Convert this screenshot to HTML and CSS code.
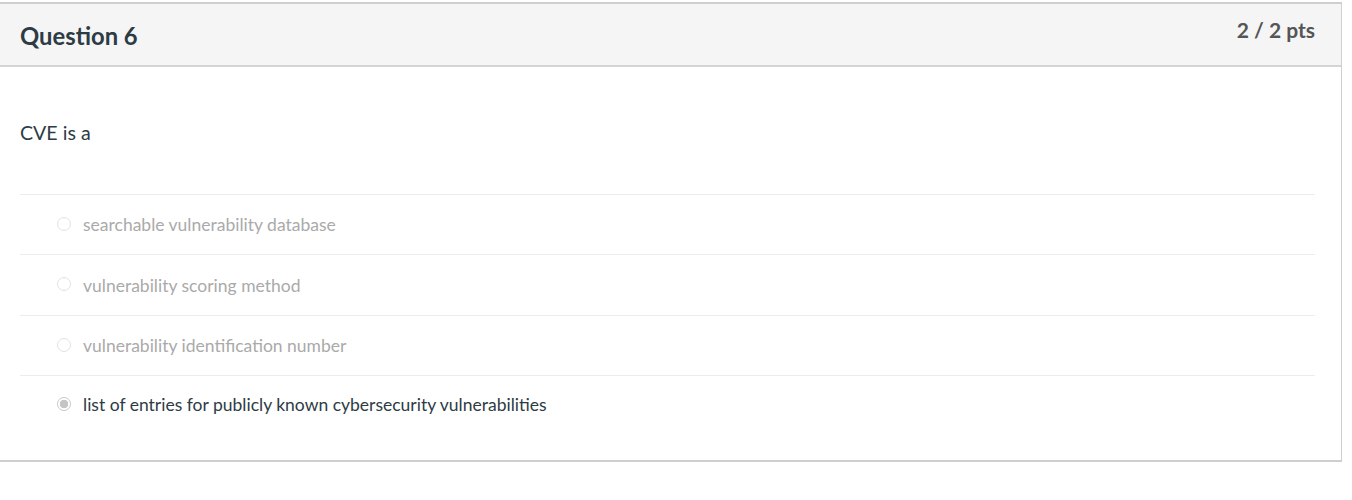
FILE: index.html
```
<!DOCTYPE html>
<html>
<head>
<meta charset="utf-8">
<link rel="stylesheet" href="styles.css">
</head>
<body>
<div class="card">
  <div class="header">
    <h2 class="title">Question 6</h2>
    <div class="pts">2 / 2 pts</div>
  </div>
  <div class="content">
    <p class="question">CVE is a</p>
    <div class="answers">
      <div class="answer short"><span class="radio"></span><span class="label">searchable vulnerability database</span></div>
      <div class="answer"><span class="radio"></span><span class="label">vulnerability scoring method</span></div>
      <div class="answer short"><span class="radio"></span><span class="label">vulnerability identification number</span></div>
      <div class="answer selected"><span class="radio"></span><span class="label">list of entries for publicly known cybersecurity vulnerabilities</span></div>
    </div>
  </div>
</div>
</body>
</html>
```
FILE: styles.css
```
* { box-sizing: border-box; }
body {
  margin: 0;
  font-family: Lato, "Open Sans", sans-serif;
  color: #2d3b45;
  background: #fff;
}
.card {
  margin-top: 2px;
  width: 1342px;
  border: 1px solid #cfcfcf;
  border-left: none;
  border-top-width: 2px;
  border-bottom-width: 2px;
}
.header {
  display: flex;
  justify-content: space-between;
  align-items: flex-start;
  height: 63px;
  background: #f5f5f5;
  border-bottom: 2px solid #d4d4d4;
  padding: 0 26px 0 20px;
}
.title {
  margin: 0;
  padding-top: 18px;
  font-size: 23.8px;
  font-weight: 700;
  line-height: 28px;
  color: #2d3b45;
}
.pts {
  padding-top: 13px;
  font-size: 21px;
  font-weight: 700;
  line-height: 26px;
  color: #555;
}
.content {
  padding: 0 26px 25px 20px;
}
.question {
  margin: 0;
  padding-top: 54px;
  height: 127px;
  font-size: 19.6px;
  line-height: 24px;
}
.answer {
  display: flex;
  align-items: center;
  height: 61px;
  border-top: 1px solid #ececec;
  padding-left: 37px;
  font-size: 17.5px;
  color: #aaa;
}
.answer.short { height: 60px; }
.answer.selected { height: 60px; padding-bottom: 2px; }
.radio {
  width: 14px;
  height: 14px;
  border-radius: 50%;
  border: 1px solid #e2e2e2;
  background: #fff;
  margin-right: 12px;
  flex: none;
  position: relative;
  top: -1px;
}
.answer.selected { color: #2d3b45; }
.answer.selected .radio {
  border-color: #c8c8c8;
  background: radial-gradient(circle, #c4c4c4 0 4px, #fff 4.5px);
}
```
